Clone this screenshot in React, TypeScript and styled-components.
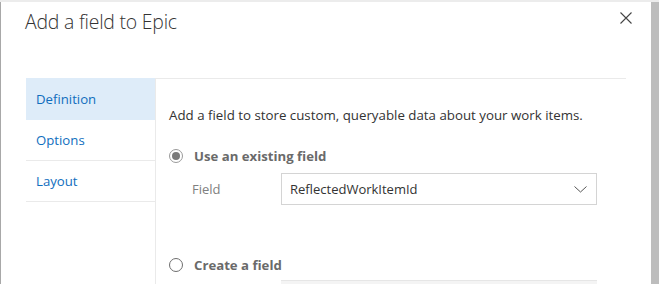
import React from "react";
import styled, { createGlobalStyle } from "styled-components";

const Global = createGlobalStyle`
  html, body { margin: 0; padding: 0; }
  body {
    width: 659px;
    height: 284px;
    overflow: hidden;
    font-family: "Open Sans", "Noto Sans", "Liberation Sans", sans-serif;
    background: linear-gradient(to bottom, #ececec 0 2px, #bdbdbd 2px);
  }
`;

const Page = styled.div`
  display: flex;
  height: 284px;
  padding: 2px 8px 0 0;
  box-sizing: border-box;
`;

const Dialog = styled.div`
  flex: 1;
  background: #fff;
  border-left: 1px solid #a8a8a8;
  display: flex;
  flex-direction: column;
  overflow: hidden;
`;

const Header = styled.div`
  display: flex;
  justify-content: space-between;
  align-items: flex-start;
  height: 76px;
  padding: 0 19px 0 24px;
`;

const Title = styled.h1`
  margin: 6px 0 0;
  font-size: 19.4px;
  font-weight: 300;
  color: #333;
  letter-spacing: -0.2px;
`;

const CloseButton = styled.button`
  border: 0;
  background: transparent;
  padding: 0;
  margin-top: 10px;
  width: 12px;
  height: 12px;
  display: flex;
  cursor: pointer;
`;

const Body = styled.div`
  flex: 1;
  display: flex;
  padding: 0 25px;
  min-height: 0;
`;

const Nav = styled.nav`
  width: 129px;
  border-right: 1px solid #eaeaea;
  display: flex;
  flex-direction: column;
`;

const NavItem = styled.div<{ $selected?: boolean }>`
  height: 40px;
  display: flex;
  align-items: center;
  padding-left: 10px;
  font-size: 13.2px;
  color: #106ebe;
  background: ${(p) => (p.$selected ? "#deecf9" : "transparent")};
  border-bottom: 1px solid ${(p) => (p.$selected ? "#deecf9" : "#eaeaea")};
  &:first-child {
    height: 41px;
  }
`;

const Content = styled.div`
  flex: 1;
  border-top: 1px solid #eaeaea;
  padding: 27px 0 0 13px;
  display: flex;
  flex-direction: column;
`;

const Description = styled.p`
  margin: 0;
  font-size: 13.3px;
  line-height: 18px;
  color: #333;
  white-space: nowrap;
`;

const RadioRow = styled.label<{ $gap: number }>`
  display: flex;
  align-items: center;
  height: 20px;
  margin-top: ${(p) => p.$gap}px;
  font-size: 13.2px;
  font-weight: 700;
  color: #6a6a6a;
`;

const Radio = styled.span<{ $checked?: boolean }>`
  width: 12px;
  height: 12px;
  border-radius: 50%;
  border: 1px solid ${(p) => (p.$checked ? "#9a9a9a" : "#6e6e6e")};
  margin-right: 11px;
  display: flex;
  align-items: center;
  justify-content: center;
  &::after {
    content: "";
    display: ${(p) => (p.$checked ? "block" : "none")};
    width: 8px;
    height: 8px;
    border-radius: 50%;
    background: #7a7a7a;
  }
`;

const FieldRow = styled.div`
  display: flex;
  align-items: center;
  margin: 8px 0 0 23px;
`;

const FieldLabel = styled.span`
  width: 89px;
  font-size: 13px;
  color: #808080;
`;

const Select = styled.div`
  width: 316px;
  height: 32px;
  box-sizing: border-box;
  border: 1px solid #d4d4d4;
  display: flex;
  align-items: center;
  justify-content: space-between;
  padding: 0 9px 0 8px;
  font-size: 13px;
  color: #333;
`;

const DisabledInput = styled.div`
  width: 316px;
  height: 30px;
  margin: 6px 0 0 112px;
  background: #f4f4f4;
  border-top: 1px solid #e6e6e6;
`;

const Chevron = () => (
  <svg width="13" height="7" viewBox="0 0 13 7" fill="none">
    <path d="M0.5 0.5 L6.5 6 L12.5 0.5" stroke="#555" strokeWidth="1" />
  </svg>
);

const CloseIcon = () => (
  <svg width="12" height="12" viewBox="0 0 12 12" fill="none">
    <path d="M0.5 0.5 L11.5 11.5 M11.5 0.5 L0.5 11.5" stroke="#444" strokeWidth="1.1" />
  </svg>
);

export default function App() {
  return (
    <>
      <Global />
      <Page>
        <Dialog>
          <Header>
            <Title>Add a field to Epic</Title>
            <CloseButton aria-label="Close">
              <CloseIcon />
            </CloseButton>
          </Header>
          <Body>
            <Nav>
              <NavItem $selected>Definition</NavItem>
              <NavItem>Options</NavItem>
              <NavItem>Layout</NavItem>
            </Nav>
            <Content>
              <Description>
                Add a field to store custom, queryable data about your work items.
              </Description>
              <RadioRow $gap={23}>
                <Radio $checked />
                Use an existing field
              </RadioRow>
              <FieldRow>
                <FieldLabel>Field</FieldLabel>
                <Select>
                  <span>ReflectedWorkItemId</span>
                  <Chevron />
                </Select>
              </FieldRow>
              <RadioRow $gap={51}>
                <Radio />
                Create a field
              </RadioRow>
              <DisabledInput />
            </Content>
          </Body>
        </Dialog>
      </Page>
    </>
  );
}
